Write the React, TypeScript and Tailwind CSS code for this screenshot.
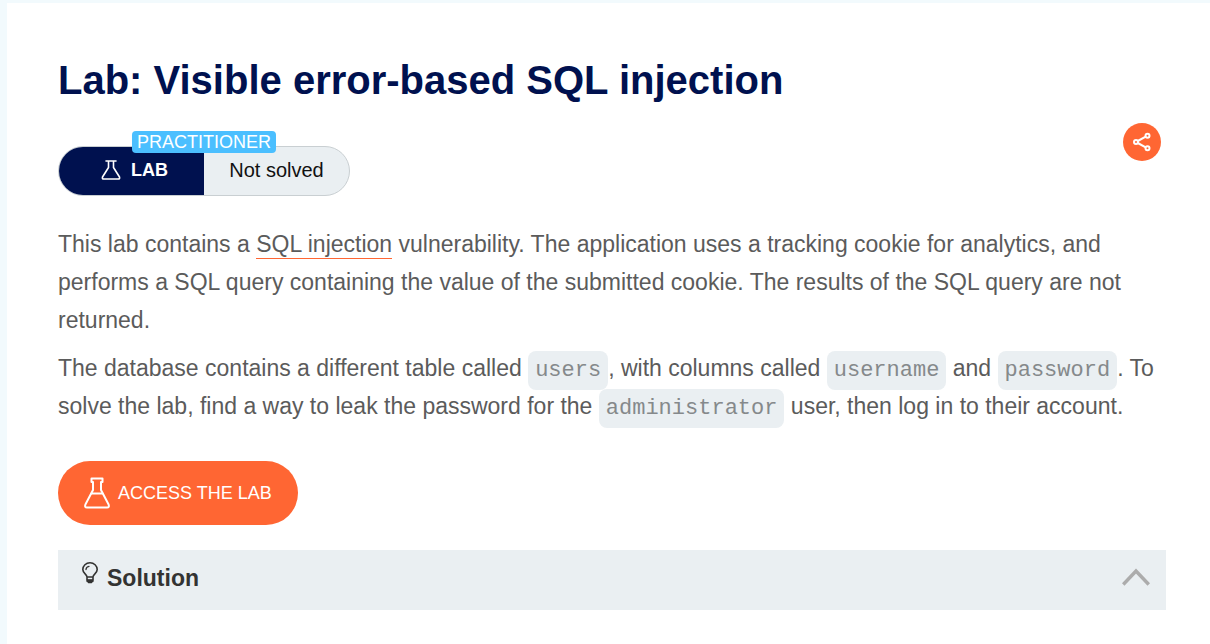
import { useState, type ReactNode } from "react";

function Flask({ className }: { className: string }) {
  return (
    <svg
      viewBox="0 0 26 32"
      className={className}
      fill="none"
      stroke="currentColor"
      strokeLinejoin="round"
      strokeLinecap="round"
      strokeWidth="2"
      aria-hidden="true"
    >
      <path d="M7.500 1.500h11v3.500h-1.500v8l7.600 14.500q1 3-1.500 3H2.900q-2.500 0-1.500-3L9 13V5H7.500z" />
      <path d="M7.500 16.500h11" />
    </svg>
  );
}

function SmallFlask() {
  return (
    <svg
      viewBox="0 0 20 20"
      className="h-5 w-5 shrink-0"
      fill="none"
      stroke="currentColor"
      strokeWidth="1.6"
      strokeLinejoin="round"
      strokeLinecap="round"
      aria-hidden="true"
    >
      <path d="M5 1h10M7.500 1v6.500L1.500 17q-.6 2 1.200 2h14.600q1.800 0 1.200-2L12.500 7.500V1" />
    </svg>
  );
}

function Bulb() {
  return (
    <svg
      viewBox="0 0 18 22"
      className="h-[22px] w-[18px] shrink-0"
      fill="none"
      stroke="currentColor"
      strokeWidth="1.6"
      strokeLinecap="round"
      strokeLinejoin="round"
      aria-hidden="true"
    >
      <path d="M6 15C6 12 1.800 11.500 1.800 7.600a7.200 6.800 0 0 1 14.400 0C16.200 11.500 12 12 12 15zM6 15v3h6v-3M7.500 20.500h3" />
      <path d="M5 7.500Q5.200 4.700 8 4.300" strokeWidth="1.300" />
      <path d="M6.500 19h5" strokeWidth="2.400" />
    </svg>
  );
}

function Code({ children }: { children: ReactNode }) {
  return (
    <code className="rounded-lg bg-[#eaeff2] px-[7px] py-[7px] font-['Liberation_Mono',monospace] text-[22px] leading-none text-[#85898b]">
      {children}
    </code>
  );
}

export default function App() {
  const [open, setOpen] = useState(false);

  return (
    <div className="min-h-screen bg-[#f2fafd] pt-[3px] pl-[7px] font-['Liberation_Sans',Arial,sans-serif]">
      <main className="min-h-[calc(100vh-3px)] bg-white pt-[54px] pr-11 pb-8 pl-[51px]">
        <h1 className="text-[40px] leading-[46px] font-bold text-[#00114f]">
          Lab: Visible error-based SQL injection
        </h1>

        <div className="mt-5 flex items-start justify-between pr-[5px]">
          <div className="relative mt-[23px] grid h-[50px] w-[292px] grid-cols-2 rounded-full border border-[#c9cfd2] bg-[#eaeff2] text-xl">
            <span className="absolute -top-4 left-1/2 flex h-[22px] -translate-x-1/2 items-center rounded bg-[#4bbfff] px-[5px] text-lg text-white">
              PRACTITIONER
            </span>
            <span className="flex items-center justify-center gap-2.5 rounded-l-full bg-[#00114f] pb-0.5 pl-1.5 text-lg font-bold text-white">
              <SmallFlask />
              LAB
            </span>
            <span className="flex items-center justify-center pb-0.5 text-[#111111]">
              Not solved
            </span>
          </div>
          <button
            type="button"
            aria-label="Share"
            className="flex size-[38px] cursor-pointer items-center justify-center rounded-full bg-[#ff6633] text-white"
          >
            <svg
              viewBox="0 0 18 20"
              className="h-5 w-[18px]"
              fill="none"
              stroke="currentColor"
              strokeWidth="2"
              aria-hidden="true"
            >
              <circle cx="3" cy="10" r="2" />
              <circle cx="14.500" cy="3.800" r="2" />
              <circle cx="14.500" cy="16.200" r="2" />
              <path d="M4.800 9l7.900-4.300M4.800 11l7.900 4.300" />
            </svg>
          </button>
        </div>

        <div className="mt-[29px] flex flex-col gap-2.5 text-[23px] leading-[38px] text-[#5b5b5b]">
          <p>
            This lab contains a{" "}
            <a href="#sql-injection" className="border-b border-b-[#ff6633] pb-px">
              SQL injection
            </a>{" "}
            vulnerability. The application uses a tracking cookie for analytics, and performs a SQL
            query containing the value of the submitted cookie. The results of the SQL query are not
            returned.
          </p>
          <p>
            The database contains a different table called <Code>users</Code>, with columns called{" "}
            <Code>username</Code> and <Code>password</Code>. To solve the lab, find a way to leak the
            password for the <Code>administrator</Code> user, then log in to their account.
          </p>
        </div>

        <a
          href="#access"
          className="mt-9 flex h-16 w-fit items-center gap-2 rounded-full bg-[#ff6633] px-[26px] text-lg text-white"
        >
          <Flask className="h-8 w-[26px]" />
          ACCESS THE LAB
        </a>

        <section className="mt-[25px] bg-[#eaeff2]">
          <button
            type="button"
            aria-expanded={open}
            onClick={() => setOpen(!open)}
            className="flex h-[60px] w-full cursor-pointer items-center justify-between pr-4 pb-1.5 pl-[23px] text-[#333332]"
          >
            <span className="flex items-start gap-2 text-[23px] leading-7 font-bold">
              <Bulb />
              <span className="pt-0.5">Solution</span>
            </span>
            <svg
              viewBox="0 0 28 18"
              className="h-[18px] w-7"
              fill="none"
              stroke="#acacac"
              strokeWidth="3.500"
              aria-hidden="true"
            >
              <path d="M1.200 16.500L14 3l12.800 13.500" />
            </svg>
          </button>
        </section>
      </main>
    </div>
  );
}
